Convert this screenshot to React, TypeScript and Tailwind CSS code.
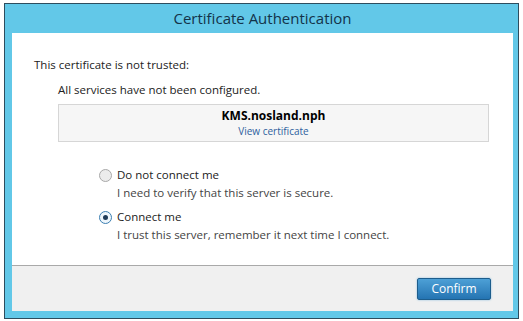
import React from "react";

const font = { fontFamily: '"Open Sans", "Noto Sans", sans-serif' };

function Radio({ checked }: { checked?: boolean }) {
  return (
    <span
      className={
        "flex h-[13px] w-[13px] shrink-0 items-center justify-center rounded-full border " +
        (checked ? "border-[#3c7fb1] bg-[#eef6fc]" : "border-[#a8a8a8] bg-[#ececec]")
      }
    >
      {checked && <span className="h-[5px] w-[5px] rounded-full bg-[#1e3b58]" />}
    </span>
  );
}

export default function App() {
  return (
    <div className="h-[321px] w-[523px] bg-white pl-[4px] pt-[3px]" style={font}>
      <div className="flex h-[316px] w-[515px] flex-col border border-[#2d4d5e] bg-[#62c8e8] pl-[7px] pr-[5px] pb-[7px]">
        {/* title */}
        <div className="flex h-[29px] shrink-0 items-center justify-center text-[15px] text-[#13334a]">
          Certificate Authentication
        </div>

        {/* body */}
        <div className="flex flex-1 flex-col bg-white text-[11.5px] text-[#222]">
          <p className="ml-[22px] mt-[24px] leading-[16px]">This certificate is not trusted:</p>
          <p className="ml-[46px] mt-[9px] leading-[16px]">All services have not been configured.</p>

          <div className="ml-[46px] mt-[6px] flex h-[38px] w-[431px] flex-col items-center border border-[#d6d6d6] bg-[#f6f6f6] pt-[2px]">
            <span className="text-[12px] font-bold leading-[18px] text-black">KMS.nosland.nph</span>
            <span className="text-[10px] leading-[13px] text-[#2e5f9e]">View certificate</span>
          </div>

          <div className="ml-[87px] mt-[25px] flex flex-col">
            <div className="flex items-center gap-[5px] leading-[16px]">
              <Radio />
              <span>Do not connect me</span>
            </div>
            <p className="ml-[18px] mt-[2px] leading-[16px] text-[#444]">I need to verify that this server is secure.</p>

            <div className="mt-[8px] flex items-center gap-[5px] leading-[16px]">
              <Radio checked />
              <span>Connect me</span>
            </div>
            <p className="ml-[18px] mt-[2px] leading-[16px] text-[#444]">
              I trust this server, remember it next time I connect.
            </p>
          </div>
        </div>

        {/* footer */}
        <div className="flex h-[46px] shrink-0 items-start justify-end border-t border-[#a9a9a9] bg-[#f0f0f0] pr-[22px] pt-[12px]">
          <button className="flex h-[22px] w-[74px] items-center justify-center rounded-[2px] border border-[#1d5d8c] bg-gradient-to-b from-[#4da0d6] to-[#2474b2] text-[12px] text-white shadow-[0_0_2px_#7fb6dc]">
            Confirm
          </button>
        </div>
      </div>
    </div>
  );
}
